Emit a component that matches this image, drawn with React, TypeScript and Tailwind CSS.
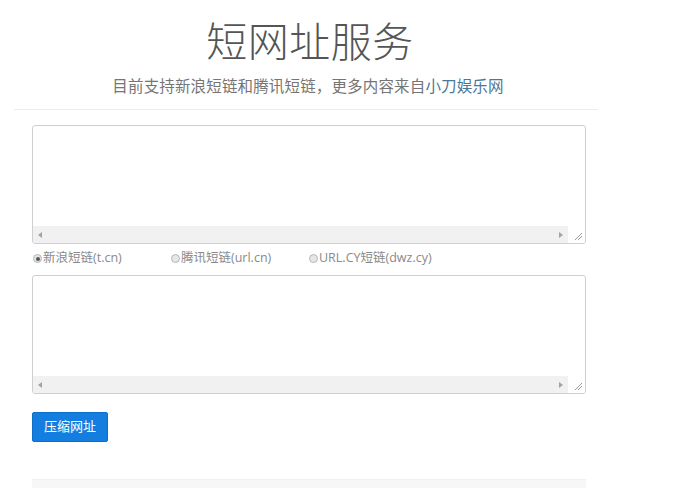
import React, { useState } from "react";

const options = [
  { id: 1, label: "新浪短链(t.cn)" },
  { id: 2, label: "腾讯短链(url.cn)" },
  { id: 3, label: "URL.CY短链(dwz.cy)" },
];

const font = { fontFamily: '"Open Sans", "Noto Sans CJK SC", sans-serif' };

const FakeTextarea = () => (
  <div className="w-[554px] h-[119px] border border-[#cfcfcf] rounded-[3px] bg-white flex flex-col overflow-hidden">
    <div className="flex-1" />
    <div className="h-[17px] flex items-stretch">
      <div className="flex-1 bg-[#f1f1f1] flex items-center justify-between px-[5px]">
        <span className="w-0 h-0 border-y-[3px] border-y-transparent border-r-[4px] border-r-[#a3a3a3]" />
        <span className="w-0 h-0 border-y-[3px] border-y-transparent border-l-[4px] border-l-[#a3a3a3]" />
      </div>
      <div className="w-[17px] bg-white flex items-end justify-end p-[2px]">
        <svg width="10" height="10" viewBox="0 0 10 10">
          <path d="M9 2 L2 9 M9 5 L5 9" stroke="#9a9a9a" strokeWidth="1" />
        </svg>
      </div>
    </div>
  </div>
);

const App = () => {
  const [active, setActive] = useState<number>(1);
  return (
    <div className="w-[691px] h-[502px] bg-white overflow-hidden" style={font}>
      <div className="mx-[14px] w-[584px] border-b border-[#ececec] pt-[13px] pb-[12px] flex flex-col items-center">
        <h1 className="text-[41px] leading-[56px] font-light text-[#555] tracking-[0.5px] ml-[8px]">短网址服务</h1>
        <p className="text-[15.5px] leading-[22px] text-[#757575] mt-[6px] ml-[4px] tracking-[0.15px]">
          目前支持新浪短链和腾讯短链，更多内容来自<a className="text-[#4a7899]">小刀娱乐网</a>
        </p>
      </div>

      <div className="pl-[32px] pt-[15px]">
        <FakeTextarea />

        <div className="flex items-center h-[31px] pl-[1px] pb-[2px]">
          {options.map((o) => (
            <label
              key={o.id}
              onClick={() => setActive(o.id)}
              className="w-[138px] flex items-center text-[12.5px] text-[#8a8a8a] cursor-pointer"
            >
              <span className="w-[9px] h-[9px] rounded-full border border-[#b5b5b5] bg-[#e6e6e6] flex items-center justify-center mr-[1px]">
                {active === o.id && <span className="w-[4px] h-[4px] rounded-full bg-[#555]" />}
              </span>
              {o.label}
            </label>
          ))}
        </div>

        <FakeTextarea />

        <button className="mt-[18px] w-[76px] h-[30px] bg-[#137ee0] border border-[#0e6fcb] rounded-[2px] text-white text-[13px]">
          压缩网址
        </button>

        <div className="mt-[37px] w-[554px] h-[9px] bg-[#f7f7f7] border-t border-[#efefef]" />
      </div>
    </div>
  );
};

export default App;
